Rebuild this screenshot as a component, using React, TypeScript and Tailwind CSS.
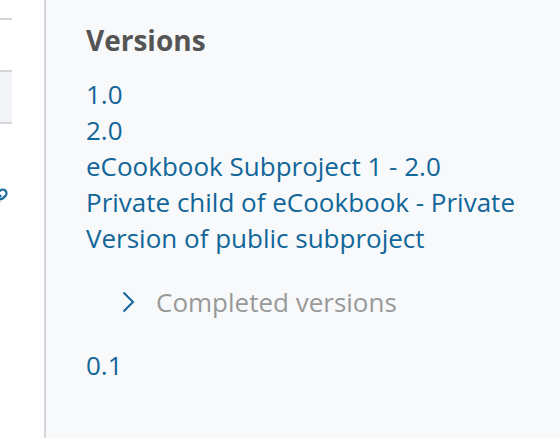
export default function App() {
  return (
    <div className="flex h-[438px] w-full overflow-hidden bg-white font-['Open_Sans',sans-serif]">
      {/* cut-off edge of the main content area */}
      <div className="flex w-[44px] shrink-0 flex-col overflow-hidden bg-white">
        <div className="h-[18px]" />
        <div className="h-[2px] w-[12px] bg-[#d3d7dc]" />
        <div className="h-[50px]" />
        <div className="h-[54px] w-[12px] border-y-2 border-[#d3d7dc] bg-[#f2f4f7]" />
        <div className="h-[64px]" />
        <div className="-ml-[10px] h-[18px] w-[18px]">
          <svg width="18" height="18" viewBox="0 0 24 24" fill="none" stroke="#1a6aa0" strokeWidth="3" strokeLinecap="round" strokeLinejoin="round">
            <path d="M10 13a5 5 0 0 0 7.54.54l3-3a5 5 0 0 0-7.07-7.07l-1.72 1.71" />
            <path d="M14 11a5 5 0 0 0-7.54-.54l-3 3a5 5 0 0 0 7.07 7.07l1.71-1.71" />
          </svg>
        </div>
      </div>

      {/* sidebar */}
      <div className="flex-1 border-l-2 border-[#d3d7dc] bg-[#f8f9fa] pl-[40px] pr-[20px] pt-[23px]">
        <h3 className="text-[28px] font-bold leading-[34px] text-[#555]">Versions</h3>

        <ul className="mt-[19px] text-[26px] leading-[36px] text-[#169]">
          <li><a href="#">1.0</a></li>
          <li><a href="#">2.0</a></li>
          <li><a href="#">eCookbook Subproject 1 - 2.0</a></li>
          <li><a href="#">Private child of eCookbook - Private Version of public subproject</a></li>
        </ul>

        <div className="mt-[28px] flex h-[36px] items-center pl-[36px] text-[26px] text-[#999]">
          <svg width="13" height="22" viewBox="0 0 13 22" fill="none" className="mr-[21px]">
            <path d="M1.5 1.5 L11 11 L1.5 20.5" stroke="#169" strokeWidth="2" />
          </svg>
          <span>Completed versions</span>
        </div>

        <div className="mt-[27px] text-[26px] leading-[36px] text-[#169]">
          <a href="#">0.1</a>
        </div>
      </div>
    </div>
  )
}
